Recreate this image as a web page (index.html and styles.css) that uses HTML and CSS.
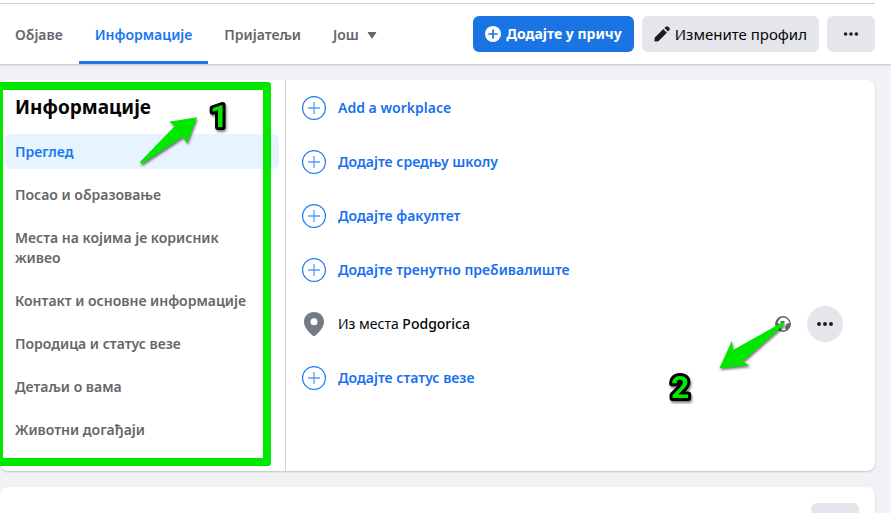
FILE: index.html
```html
<!DOCTYPE html>
<html lang="sr">
<head>
<meta charset="utf-8">
<meta name="viewport" content="width=device-width, initial-scale=1">
<title>Информације</title>
<link rel="stylesheet" href="styles.css">
</head>
<body>
<svg class="sprite" aria-hidden="true">
  <symbol id="plus-circle" viewBox="0 0 24 24">
    <circle cx="12" cy="12" r="11.4" fill="none" stroke="#1877f2" stroke-width="1.2"/>
    <path d="M12 6v12M6 12h12" fill="none" stroke="#5b9cf2" stroke-width="1.3"/>
  </symbol>
  <symbol id="dots" viewBox="0 0 20 20">
    <circle cx="4" cy="10" r="2"/><circle cx="10" cy="10" r="2"/><circle cx="16" cy="10" r="2"/>
  </symbol>
</svg>

<header class="profile-bar">
  <div class="profile-bar-inner">
    <nav class="tabs">
      <a class="tab" href="#posts">Објаве</a>
      <a class="tab tab-active" href="#about" aria-current="page">Информације</a>
      <a class="tab" href="#friends">Пријатељи</a>
      <a class="tab" href="#more">Још
        <svg class="caret" viewBox="0 0 10 8"><path d="M1.2 1h7.6q.9 0 .4.8L5.6 6.9q-.6.7-1.2 0L.8 1.8Q.3 1 1.2 1z" fill="#65676b"/></svg>
      </a>
    </nav>
    <div class="actions">
      <button class="btn btn-primary" type="button">
        <svg class="icon" viewBox="0 0 16 16"><circle cx="8" cy="8" r="8" fill="#fff"/><path d="M8 4v8M4 8h8" stroke="#1b74e4" stroke-width="1.7" stroke-linecap="round"/></svg>
        Додајте у причу
      </button>
      <button class="btn" type="button">
        <svg class="icon" viewBox="0 0 16 16"><path d="M.8 11.600 9.300 3.100 12.900 6.700 4.400 15.200 1.500 15.600Q.4 15.600.4 14.500zM10.400 2 11.800.7Q13.200-.4 14.400.9L15.100 1.600Q16.400 2.900 15.200 4.200L14 5.600z" fill="#1c1e21"/></svg>
        Измените профил
      </button>
      <button class="btn btn-more" type="button" aria-label="Још опција"><svg class="dots"><use href="#dots"/></svg></button>
    </div>
  </div>
</header>

<main class="page">
  <section class="card about">
    <div class="sidebar">
      <h2 class="title">Информације</h2>
      <nav class="menu">
        <a class="menu-item menu-item-active" href="#overview">Преглед</a>
        <a class="menu-item" href="#work">Посао и образовање</a>
        <a class="menu-item" href="#places">Места на којима је корисник живео</a>
        <a class="menu-item" href="#contact">Контакт и основне информације</a>
        <a class="menu-item" href="#family">Породица и статус везе</a>
        <a class="menu-item" href="#details">Детаљи о вама</a>
        <a class="menu-item" href="#events">Животни догађаји</a>
      </nav>
      <div class="frame"></div>
      <svg class="mark mark-one" viewBox="0 0 100 80">
        <path d="M4 70 39 33.700 33 29.700 61 25.300 51 51.300 47 44.700 6.500 71.500Q4.500 72.500 4 70z"/>
        <text x="74" y="35">1</text>
      </svg>
    </div>
    <ul class="facts">
      <li class="fact"><svg class="fact-icon"><use href="#plus-circle"/></svg><a class="add" href="#add-work">Add a workplace</a></li>
      <li class="fact"><svg class="fact-icon"><use href="#plus-circle"/></svg><a class="add" href="#add-school">Додајте средњу школу</a></li>
      <li class="fact"><svg class="fact-icon"><use href="#plus-circle"/></svg><a class="add" href="#add-college">Додајте факултет</a></li>
      <li class="fact"><svg class="fact-icon"><use href="#plus-circle"/></svg><a class="add" href="#add-city">Додајте тренутно пребивалиште</a></li>
      <li class="fact">
        <svg class="fact-icon" viewBox="0 0 24 24"><path fill-rule="evenodd" d="M12 0C6.300 0 2 4.200 2 9.700c0 5.500 4.800 10.500 8.600 13.800q1.400 1 2.800 0C17.200 20.200 22 15.200 22 9.700 22 4.200 17.700 0 12 0zm0 6.200a3.500 3.500 0 1 1 0 7 3.500 3.500 0 0 1 0-7z" fill="#737b87"/></svg>
        <span class="place">Из места <strong>Podgorica</strong></span>
        <svg class="icon globe" viewBox="0 0 16 16"><circle cx="8" cy="8" r="7.200" fill="#fff" stroke="#606770" stroke-width="1.500"/><path d="M1 5Q3 1 7 .8L4.500 3.500 2.500 6.500 5 8.500 6.500 11 5.500 15Q1 13 1 8zM11.500 8l2-1 2 .5Q15.500 12 11 14.800L10 12zM5 6q2-2 5-.5l-1 1.200-3 .5z" fill="#606770"/></svg>
        <button class="round" type="button" aria-label="Опције"><svg class="round-icon"><use href="#dots"/></svg></button>
      </li>
      <li class="fact"><svg class="fact-icon"><use href="#plus-circle"/></svg><a class="add" href="#add-status">Додајте статус везе</a></li>
    </ul>
    <svg class="mark mark-two" viewBox="0 0 130 90">
      <path d="M123 4 73 32 72 22.500 59.300 50.300 89.500 47.300 82.500 43.500 124.500 6.500Q125 4 123 4z"/>
      <text x="11" y="80">2</text>
    </svg>
  </section>

  <section class="card friends">
    <button class="btn btn-more" type="button" aria-label="Опције"></button>
  </section>
</main>
</body>
</html>
```
FILE: styles.css
```css
* { box-sizing: border-box; }

body {
  margin: 0;
  background: #f0f2f5;
  color: #050505;
  font: 400 14px/20px "Noto Sans", "Open Sans", sans-serif;
}

a { color: inherit; text-decoration: none; }

.sprite { position: absolute; width: 0; height: 0; }

.profile-bar {
  background: #fff;
  padding: 3px 16px 0 0;
  box-shadow: 0 1px 2px rgba(0, 0, 0, .2);
}

.profile-bar-inner {
  display: flex;
  justify-content: space-between;
  border-top: 1px solid #ced0d4;
  height: 61px;
}

.tabs { display: flex; }

.tab {
  display: flex;
  align-items: center;
  gap: 8px;
  padding: 4px 16px 0;
  color: #65676b;
  font-weight: 600;
  border-bottom: 3px solid transparent;
}

.tab:first-child { padding-left: 15px; }

.tab-active { color: #1877f2; border-color: #1877f2; }

.caret { width: 10px; height: 8px; }

.actions { display: flex; gap: 8px; padding-top: 12px; }

.btn {
  display: flex;
  align-items: center;
  justify-content: center;
  gap: 5px;
  height: 36px;
  padding: 0 12px;
  border: 0;
  border-radius: 6px;
  background: #e4e6eb;
  color: #050505;
  font: inherit;
  font-size: 15px;
  white-space: nowrap;
}

.btn-primary { background: #1b74e4; color: #fff; font-size: 14px; font-weight: 700; }

.btn-more { width: 48px; }

.icon { width: 16px; height: 16px; flex: none; }

.dots { width: 18px; height: 18px; flex: none; fill: #1c1e21; }

.page {
  display: flex;
  flex-direction: column;
  gap: 16px;
  padding: 16px 16px 0 0;
}

.card {
  position: relative;
  background: #fff;
  border-radius: 8px;
  box-shadow: 0 1px 2px rgba(0, 0, 0, .2);
}

.about { display: flex; }

.sidebar {
  position: relative;
  flex: none;
  width: 286px;
  padding: 14px 6px 24px 5px;
  border-right: 1px solid #ced0d4;
}

.title { margin: 0 10px 14px; font-size: 19px; line-height: 26px; font-weight: 700; }

.menu { display: flex; flex-direction: column; gap: 8px; }

.menu-item {
  padding: 8px 24px 7px 10px;
  border-radius: 6px;
  color: #65676b;
  font-weight: 600;
}

.menu-item-active { background: #e7f3ff; color: #1877f2; }

.facts {
  display: flex;
  flex: 1;
  flex-direction: column;
  gap: 18px;
  margin: 0;
  padding: 10px 32px 0 16px;
  list-style: none;
}

.fact { display: flex; align-items: center; gap: 12px; height: 36px; }

.fact-icon { width: 24px; height: 24px; flex: none; }

.add { color: #1870f0; font-weight: 600; }

.place { flex: 1; }

.place strong { font-weight: 500; }

.globe { margin-right: 4px; }

.round {
  display: grid;
  place-items: center;
  width: 36px;
  height: 36px;
  padding: 0;
  border: 0;
  border-radius: 50%;
  background: #e4e6eb;
}

.round-icon { width: 20px; height: 20px; fill: #1c1e21; }

/* Only the top of this card fits in the first screenful */
.friends {
  display: flex;
  justify-content: flex-end;
  height: calc(100vh - 487px);
  min-height: 26px;
  padding: 16px 16px 0;
  border-radius: 8px 8px 0 0;
  overflow: hidden;
}

/* Tutorial annotations drawn over the card */
.frame {
  position: absolute;
  top: 2px;
  right: 14px;
  bottom: 5px;
  left: -5px;
  border: 8px solid #00e800;
  border-radius: 3px;
  pointer-events: none;
}

.mark {
  position: absolute;
  fill: #00e800;
  pointer-events: none;
  filter: drop-shadow(1px 2px 1px rgba(0, 0, 0, .5));
}

.mark text {
  font: 700 32px Roboto, sans-serif;
  stroke: #000;
  stroke-width: 6px;
  stroke-linejoin: round;
  paint-order: stroke;
}

.mark-one { top: 12px; left: 136px; width: 100px; height: 80px; }

.mark-two { top: 238px; right: 85px; width: 130px; height: 90px; }
```
